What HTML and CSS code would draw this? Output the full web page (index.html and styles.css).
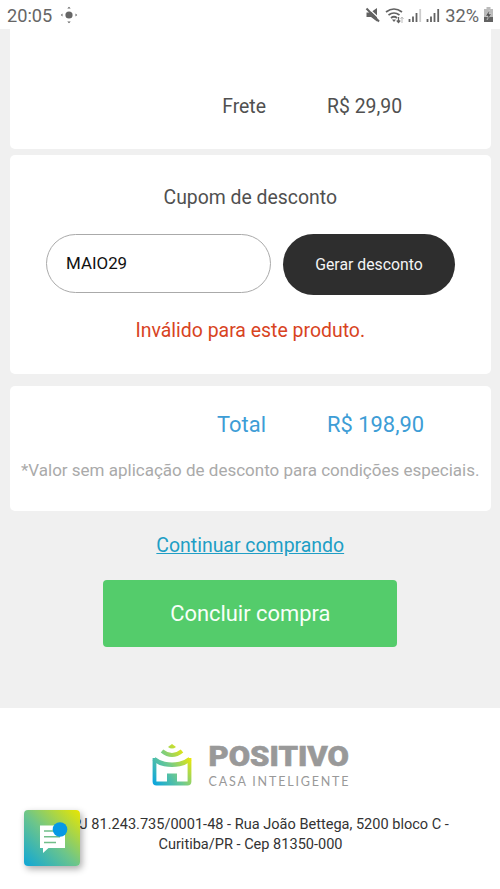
FILE: index.html
```html
<!DOCTYPE html>
<html lang="pt-BR">
<head>
<meta charset="utf-8">
<title>Carrinho - Positivo Casa Inteligente</title>
<link rel="stylesheet" href="styles.css">
</head>
<body>
<header class="status">
  <span class="clock">20:05</span>
  <svg class="location" width="18" height="18" viewBox="0 0 18 18" fill="#666"><circle cx="9" cy="9" r="3.6"/><path d="M9 .8l1.700 1.700H7.300zM9 17.200l1.700-1.700H7.300zM.8 9l1.700-1.500v3zM17.200 9l-1.700-1.500v3z"/></svg>
  <svg class="signals" width="76" height="20" viewBox="0 0 76 20" fill="none" stroke="#626262">
    <path d="M1.500 6.500h4L12 2v13.500l-6-4.500H1.500z" fill="#626262" stroke="none"/>
    <path d="M2.500 1.500l13 12" stroke="#fff" stroke-width="1.200"/><path d="M1.500 2.500l12.500 13" stroke-width="2"/>
    <path d="M21 6q8-6 16 0M23.500 9q5.500-4 11 0M26 12q3-2.500 6 0" stroke-width="1.700"/>
    <path d="M27 13.500h4l-2 2.500z" fill="#626262" stroke="none"/>
    <path d="M33.500 11v5M31.800 14.500l1.700 2 1.700-2" stroke-width="1.300"/><path d="M37 17v-6M35.500 13l1.500-2 1.500 2" stroke="#bbb"/>
    <path d="M44.500 16v-3M48 16V10.500M51.500 16V7" stroke-width="1.800"/><path d="M55.200 16V3" stroke="#ccc" stroke-width="1.800"/>
    <path d="M62.500 16v-3M66 16V10.500M69.500 16V7M73.200 16V3" stroke-width="1.800"/>
  </svg>
  <span class="percent">32%</span>
  <svg class="battery" width="11" height="16" viewBox="0 0 11 16"><path d="M3.500 0h4v2H10v13H1V2h2.500z" fill="#bbb"/><path d="M1 10h9v5H1z" fill="#626262"/><path d="M6.500 3L2.500 9h2.600L4 13l4.500-6H6z" fill="#555" stroke="#eee" stroke-width=".4"/></svg>
</header>
<main class="cart">
  <section class="card shipping">
    <span class="label">Frete</span><span class="value">R$ 29,90</span>
  </section>
  <section class="card coupon">
    <h2 class="coupon-title">Cupom de desconto</h2>
    <form class="coupon-form">
      <input class="coupon-input" type="text" value="MAIO29" aria-label="Cupom">
      <button class="coupon-button" type="button">Gerar desconto</button>
    </form>
    <p class="error">Inválido para este produto.</p>
  </section>
  <section class="card summary">
    <div class="total"><span class="label">Total</span><span class="value">R$ 198,90</span></div>
    <p class="note">*Valor sem aplicação de desconto para condições especiais.</p>
  </section>
  <a class="continue" href="#">Continuar comprando</a>
  <button class="checkout" type="button">Concluir compra</button>
</main>
<footer class="footer">
  <svg class="logo" width="200" height="46" viewBox="0 0 200 46">
    <defs><linearGradient id="brand" gradientUnits="userSpaceOnUse" x1="2" y1="40" x2="39" y2="12"><stop offset="0" stop-color="#0aa5df"/><stop offset=".5" stop-color="#6cc992"/><stop offset="1" stop-color="#f2e900"/></linearGradient></defs>
    <g fill="none" stroke="url(#brand)">
      <path d="M17 4L21 1l4 3q-4 3-8 0z" fill="url(#brand)" stroke="none"/>
      <path d="M11 8q10 8 20 0" stroke-width="4"/>
      <path d="M3.500 15v23.500q0 2 2 2h31q2 0 2-2V15" stroke-width="3.800" stroke-linejoin="round"/>
      <path d="M3 16q5 4 10.500 5 7.500 1.500 15 0Q34 20 39 16" stroke-width="4.600"/>
      <path d="M16 41V30.500h10V41" fill="url(#brand)" stroke="none"/>
    </g>
    <text class="brand-name" x="57.500" y="23" textLength="140.500" lengthAdjust="spacingAndGlyphs">POSITIVO</text>
    <text class="brand-line" x="57.500" y="42.500" textLength="140">CASA INTELIGENTE</text>
  </svg>
  <p class="address">CNPJ 81.243.735/0001-48 - Rua João Bettega, 5200 bloco C -<br>Curitiba/PR - Cep 81350-000</p>
</footer>
<button class="chat" type="button" aria-label="Chat">
  <svg width="56" height="56" viewBox="0 0 56 56"><path d="M16 15.500h25V38H24.500L19 43v-5h-3z" fill="#fff"/><path d="M20 21h12M20 26.700h16M20 32.500h12" stroke="#71be89" stroke-width="1.500"/><circle cx="36" cy="19.500" r="7.300" fill="#0799e5"/></svg>
</button>
</body>
</html>
```
FILE: styles.css
```css
* { box-sizing: border-box; }
body { margin: 0; height: 889px; overflow: hidden; background: #fff; color: #505050; font-family: Roboto, sans-serif; }
h2, p { margin: 0; font-weight: 400; }
button, input { font-family: inherit; }
.status { height: 29px; display: flex; align-items: center; padding: 2px 7px 0; color: #666; }
.clock { font-size: 18.200px; }
.location { margin: -1px 0 0 8px; }
.signals { margin: 0 4px 0 auto; }
.percent { font-size: 18.200px; margin-right: 4px; }
.battery { margin: -1px -1px 0 0; }
.cart { height: 678.500px; padding: 0 9.500px 0 10px; background: #f0f0f0; display: flex; flex-direction: column; align-items: center; }
.card { width: 100%; background: #fff; border-radius: 5px; }
.shipping { height: 120.300px; border-radius: 0 0 5px 5px; padding-top: 66px; display: flex; font-size: 19.400px; line-height: 24px; }
.label { width: 256px; text-align: right; }
.value { margin-left: 61px; }
.coupon { height: 219.200px; margin-top: 5.500px; padding-top: 31.200px; text-align: center; }
.coupon-title { font-size: 19.400px; line-height: 24px; }
.coupon-form { display: flex; gap: 12px; margin: 24px 0 0 36px; }
.coupon-input { width: 225px; height: 59px; padding: 0 19px; border: 1.500px solid #aaa; border-radius: 30px; background: #fff; color: #111; font-size: 16.900px; }
.coupon-button { width: 172px; height: 61px; padding: 0; border: 0; border-radius: 31px; background: #2e2e2e; color: #f4f4f4; font-size: 15.800px; }
.error { margin-top: 24px; color: #d8441f; font-size: 19.450px; line-height: 24px; }
.summary { height: 125.500px; margin-top: 12px; padding-top: 25.300px; }
.total { display: flex; color: #3d9dd6; font-size: 21.900px; line-height: 28px; }
.note { margin-top: 19px; text-align: center; white-space: nowrap; color: #aaa; font-size: 17px; line-height: 24px; }
.continue { margin-top: 22.700px; color: #209ec5; font-size: 19.450px; line-height: 24px; text-decoration: underline; }
.checkout { width: 294px; height: 67px; margin-top: 21.800px; padding: 0; border: 0; border-radius: 4px; background: #54cc6b; color: #f8fff9; font-size: 21.900px; }
.footer { padding-top: 35.500px; display: flex; flex-direction: column; align-items: center; }
.logo { display: block; margin-left: 2px; overflow: visible; }
.brand-name { fill: #999; stroke: #999; stroke-width: .6px; font: 900 27.500px Roboto, sans-serif; }
.brand-line { fill: #999; font: 400 12.500px Lato, sans-serif; }
.address { margin-top: 26px; padding-left: 1px; color: #333; text-align: center; font-size: 14.560px; line-height: 19.500px; }
.chat { position: absolute; left: 24px; top: 810px; width: 56px; height: 56px; padding: 0; border: 0; border-radius: 4px; background: linear-gradient(45deg, #0ea6d7, #6cc58b 48%, #e9e600); box-shadow: 2px 3px 7px #0005; }
.chat svg { display: block; }
```
